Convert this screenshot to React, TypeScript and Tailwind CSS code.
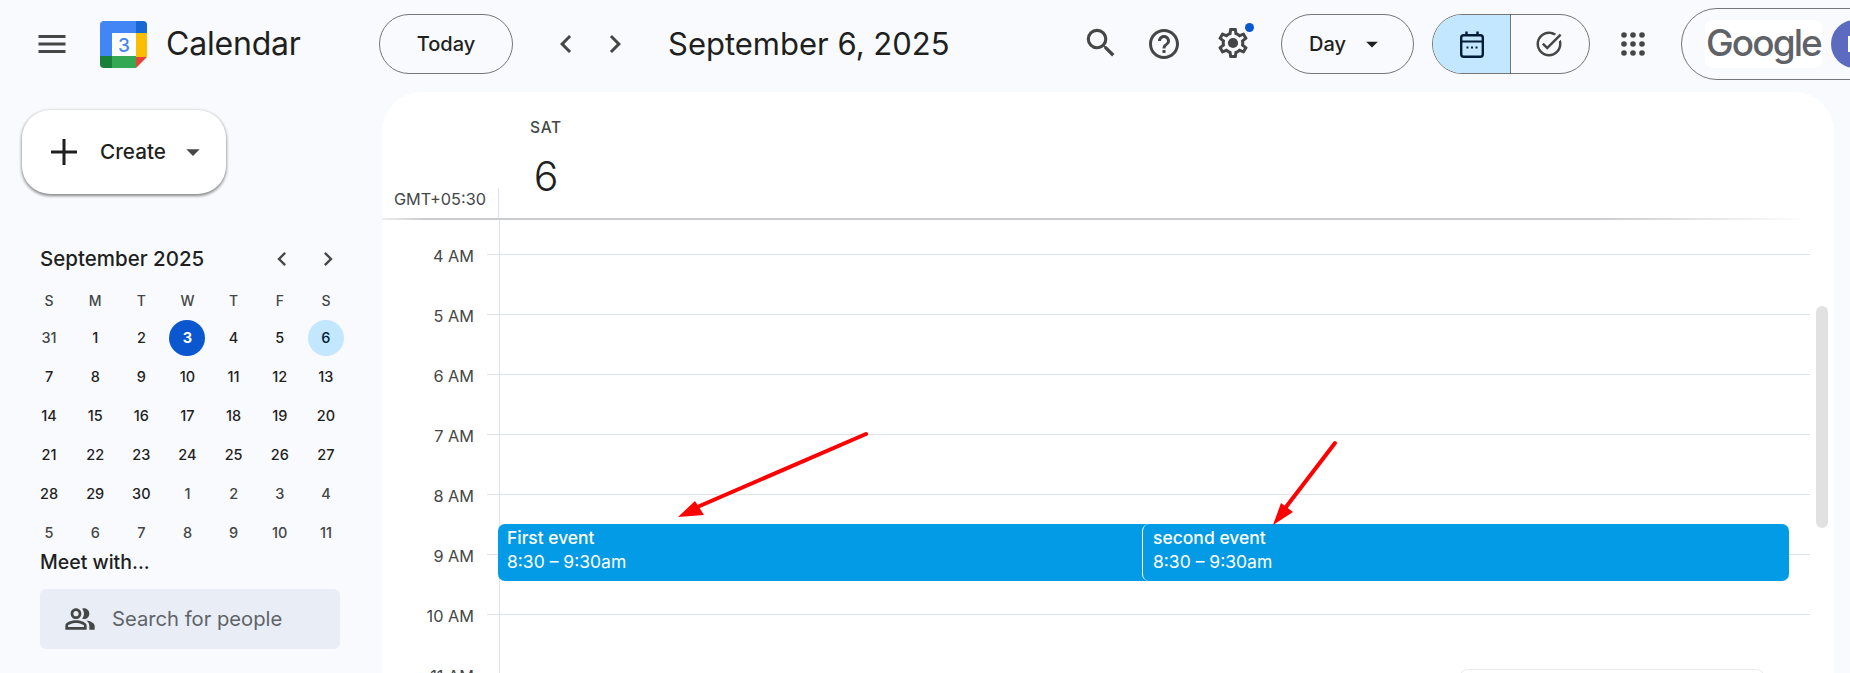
import { MdMenu, MdSearch, MdHelpOutline, MdOutlineTaskAlt, MdArrowDropDown, MdChevronLeft, MdChevronRight, MdOutlinePeopleAlt } from "react-icons/md";

const heads = ["S", "M", "T", "W", "T", "F", "S"];
const days = [31,1,2,3,4,5,6,7,8,9,10,11,12,13,14,15,16,17,18,19,20,21,22,23,24,25,26,27,28,29,30,1,2,3,4,5,6,7,8,9,10,11];
const hours = ["4 AM","5 AM","6 AM","7 AM","8 AM","9 AM","10 AM","11 AM"];

function Logo() {
  return (
    <svg width="47" height="47" viewBox="0 0 47 47" className="shrink-0">
      <path d="M4 0H36V12H12V35H0V4A4 4 0 0 1 4 0Z" fill="#4285f4" />
      <path d="M36 0H43A4 4 0 0 1 47 4V12H36Z" fill="#1967d2" />
      <rect x="36" y="12" width="11" height="24" fill="#fbbc04" />
      <path d="M36 36H47L36 47Z" fill="#ea4335" />
      <rect x="12" y="35" width="24" height="12" fill="#34a853" />
      <path d="M0 35H12V47H4A4 4 0 0 1 0 43Z" fill="#188038" />
      <rect x="12" y="12" width="24" height="23" fill="#ffffff" />
      <text x="24" y="30.5" textAnchor="middle" fontSize="19" fontWeight="500" fontFamily="Inter, sans-serif" fill="#4285f4">3</text>
    </svg>
  );
}

function CalIcon() {
  return (
    <svg width="24" height="27" viewBox="0 0 24 27" fill="none" stroke="#001d35" strokeWidth="2.4">
      <rect x="1.2" y="4.2" width="21.6" height="21.6" rx="2.5" />
      <path d="M1.5 10.5H22.5" strokeWidth="1.8" />
      <path d="M6.5 0.5V5M17.5 0.5V5" />
      <path d="M6.5 16.5H17.5" strokeWidth="2" strokeDasharray="2 2.5" />
    </svg>
  );
}

function Apps() {
  return (
    <svg width="24" height="24" viewBox="0 0 24 24" fill="#444746">
      {[3, 12, 21].map((y) => [3, 12, 21].map((x) => <circle key={`${x}-${y}`} cx={x} cy={y} r="2.8" />))}
    </svg>
  );
}

function Gear() {
  return (
    <svg width="36" height="36" viewBox="0 0 24 24" fill="#444746">
      <path d="M19.43 12.98c.04-.32.07-.64.07-.98 0-.34-.03-.66-.07-.98l2.11-1.65c.19-.15.24-.42.12-.64l-2-3.46c-.09-.16-.26-.25-.44-.25-.06 0-.12.01-.17.03l-2.49 1c-.52-.4-1.08-.73-1.69-.98l-.38-2.65C14.46 2.18 14.25 2 14 2h-4c-.25 0-.46.18-.49.42l-.38 2.65c-.61.25-1.17.59-1.69.98l-2.49-1c-.06-.02-.12-.03-.18-.03-.17 0-.34.09-.43.25l-2 3.46c-.13.22-.07.49.12.64l2.11 1.65c-.04.32-.07.65-.07.98 0 .33.03.66.07.98l-2.11 1.65c-.19.15-.24.42-.12.64l2 3.46c.09.16.26.25.44.25.06 0 .12-.01.17-.03l2.49-1c.52.4 1.08.73 1.69.98l.38 2.65c.03.24.24.42.49.42h4c.25 0 .46-.18.49-.42l.38-2.65c.61-.25 1.17-.59 1.69-.98l2.49 1c.06.02.12.03.18.03.17 0 .34-.09.43-.25l2-3.46c.12-.22.07-.49-.12-.64l-2.11-1.65zm-1.98-1.71c.04.31.05.52.05.73 0 .21-.02.43-.05.73l-.14 1.13.89.7 1.08.84-.7 1.21-1.27-.51-1.04-.42-.9.68c-.43.32-.84.56-1.25.73l-1.06.43-.16 1.13-.2 1.35h-1.4l-.19-1.35-.16-1.13-1.06-.43c-.43-.18-.83-.41-1.23-.71l-.91-.7-1.06.43-1.27.51-.7-1.21 1.08-.84.89-.7-.14-1.13c-.03-.31-.05-.54-.05-.74s.02-.43.05-.73l.14-1.13-.89-.7-1.08-.84.7-1.21 1.27.51 1.04.42.9-.68c.43-.32.84-.56 1.25-.73l1.06-.43.16-1.13.2-1.35h1.39l.19 1.35.16 1.13 1.06.43c.43.18.83.41 1.23.71l.91.7 1.06-.43 1.27-.51.7 1.21-1.07.85-.89.7.14 1.13z" />
      <circle cx="12" cy="12" r="3.4" />
    </svg>
  );
}

function TopBar() {
  return (
    <header className="flex h-[92px] items-start pt-[14px] text-[#1f1f1f]">
      <div className="flex h-[60px] w-[379px] shrink-0 items-center">
        <MdMenu size={36} className="ml-[34px] text-[#444746]" />
        <div className="ml-[30px]"><Logo /></div>
        <span className="ml-[19px] text-[32px] tracking-[-0.2px]">Calendar</span>
      </div>
      <button className="h-[60px] w-[134px] shrink-0 rounded-full border border-[#747775] text-[20px] font-medium">Today</button>
      <MdChevronLeft size={36} className="ml-[35px] mt-[12px] shrink-0 text-[#444746]" />
      <MdChevronRight size={36} className="ml-[13px] mt-[12px] shrink-0 text-[#444746]" />
      <h1 className="ml-[35px] h-[60px] w-[282px] shrink-0 whitespace-nowrap text-[31px] leading-[60px]">September 6, 2025</h1>
      <MdSearch size={38} className="ml-[132px] mt-[10px] shrink-0 text-[#444746]" />
      <MdHelpOutline size={36} className="ml-[26px] mt-[12px] shrink-0 text-[#444746]" />
      <div className="relative ml-[33px] mt-[11px] h-[36px] w-[36px] shrink-0">
        <Gear />
        <span className="absolute left-[30px] top-[-2px] h-[9px] w-[9px] rounded-full bg-[#0b57d0]" />
      </div>
      <button className="ml-[30px] flex h-[60px] w-[133px] shrink-0 items-center rounded-full border border-[#747775] pl-[27px] text-[20px] font-medium">
        Day
        <MdArrowDropDown size={28} className="ml-[12px] text-[#1f1f1f]" />
      </button>
      <div className="ml-[18px] flex h-[60px] w-[158px] shrink-0 overflow-hidden rounded-full border border-[#747775]">
        <div className="flex w-[78px] items-center justify-center border-r border-[#747775] bg-[#c2e7ff]"><CalIcon /></div>
        <div className="flex flex-1 items-center justify-center pr-[3px]"><MdOutlineTaskAlt size={30} className="text-[#444746]" /></div>
      </div>
      <div className="ml-[31px] mt-[18px] shrink-0"><Apps /></div>
      <div className="ml-[36px] mt-[-6px] flex h-[72px] w-[300px] shrink-0 items-center rounded-l-[36px] border border-[#747775] pl-[23px]">
        <div className="flex h-[48px] w-[117px] shrink-0 items-center justify-center rounded-lg bg-white">
          <span className="pb-[3px] text-[37px] font-medium leading-none tracking-[-1.9px] text-[#5f6368]">Google</span>
        </div>
        <div className="ml-[9px] flex h-[48px] w-[48px] shrink-0 items-center rounded-full bg-[#5c6bc0] pl-[17px]">
          <span className="h-[16px] w-[2px] bg-white" />
        </div>
      </div>
    </header>
  );
}

function Sidebar() {
  return (
    <aside className="w-[382px] shrink-0 text-[#1f1f1f]">
      <button className="ml-[22px] mt-[18px] flex h-[84px] w-[204px] items-center rounded-[28px] bg-white pl-[27px] shadow-[0_1px_3px_1px_rgba(0,0,0,0.2),0_2px_3px_rgba(0,0,0,0.3)]">
        <svg width="30" height="30" viewBox="0 0 30 30" stroke="#1f1f1f" strokeWidth="3" className="shrink-0"><path d="M15 2V28M2 15H28" /></svg>
        <span className="ml-[21px] text-[20.7px] font-medium leading-none">Create</span>
        <MdArrowDropDown size={32} className="ml-[11px] shrink-0 text-[#444746]" />
      </button>
      <div className="ml-[40px] mt-[47px] flex h-[36px] w-[310px] items-center">
        <span className="w-[220px] text-[20.5px] font-[450] leading-none">September 2025</span>
        <MdChevronLeft size={28} className="ml-[8px] text-[#444746]" />
        <MdChevronRight size={28} className="ml-[18px] text-[#444746]" />
      </div>
      <div className="ml-[26px] mt-[6px] grid w-[323px] grid-cols-7">
        {heads.map((h, i) => (
          <div key={i} className="flex h-[35px] items-center justify-center text-[14px] font-medium text-[#444746]">{h}</div>
        ))}
        {days.map((d, i) => {
          const other = i === 0 || i >= 31;
          const today = i === 3;
          const sel = i === 6;
          return (
            <div key={i} className="flex h-[39px] items-center justify-center">
              <span className={`flex h-9 w-9 items-center justify-center rounded-full text-[14.5px] ${today ? "bg-[#0b57d0] font-bold text-white" : sel ? "bg-[#c2e7ff] font-[450] text-[#001d35]" : other ? "font-[450] text-[#444746]" : "font-[450] text-[#1f1f1f]"}`}>{d}</span>
            </div>
          );
        })}
      </div>
      <div className="ml-[40px] mt-[-2px] h-[24px] text-[19.5px] font-medium leading-[24px]">Meet with...</div>
      <div className="ml-[40px] mt-[15px] flex h-[60px] w-[300px] items-center rounded-md bg-[#e9eef6] pl-[24px]">
        <MdOutlinePeopleAlt size={32} className="text-[#444746]" />
        <span className="ml-[16px] text-[20.2px] text-[#5f6368]">Search for people</span>
      </div>
    </aside>
  );
}

function Grid() {
  return (
    <section className="relative flex h-[581px] w-[1452px] shrink-0 overflow-hidden rounded-t-[40px] bg-white">
      <div className="w-[1428px] shrink-0">
        <div className="flex h-[126px]">
          <div className="flex h-[30px] w-[117px] shrink-0 items-center justify-end self-end border-r border-[#dde3ea] pr-[12px] text-[16.3px] text-[#444746]">
            <span className="mb-[8px] leading-5">GMT+05:30</span>
          </div>
          <div className="flex w-[94px] flex-col items-center pt-[26px]">
            <span className="text-[15.5px] font-medium leading-5 tracking-[0.8px] text-[#444746]">SAT</span>
            <span className="mt-[13px] text-[41px] font-light leading-[50px] text-[#1f1f1f]">6</span>
          </div>
        </div>
        <div className="h-[2px] bg-[linear-gradient(90deg,#eceef0_0,#c9cbce_3%,#c9cbce_85%,#ffffff_100%)]" />
        {hours.map((h, i) => (
          <div key={h} className={`flex ${i === 0 ? "h-[35px]" : "h-[60px]"}`}>
            <div className="flex w-[105px] shrink-0 items-end justify-end pr-[13px]">
              <span className="mb-[-11px] text-[16.3px] leading-5 text-[#444746]">{h}</span>
            </div>
            <div className="w-[12px] shrink-0 border-b border-[#dde3ea]" />
            <div className="flex-1 border-b border-l border-[#dde3ea]" />
          </div>
        ))}
      </div>
      <div className="ml-[6px] mt-[214px] h-[222px] w-3 shrink-0 rounded-full bg-[#e1e1e1]" />

      <div className="absolute left-[116px] top-[432px] h-[57px] w-[670px] rounded-[7px] bg-[#039be5] pl-[9px] pt-[2px] text-white">
        <div className="text-[17.4px] font-medium leading-6">First event</div>
        <div className="text-[17.5px] leading-6">8:30 – 9:30am</div>
      </div>
      <div className="absolute left-[760px] top-[432px] h-[57px] w-[647px] rounded-[7px] border-l border-white bg-[#039be5] pl-[10px] pt-[2px] text-white">
        <div className="text-[17.5px] font-medium leading-6">second event</div>
        <div className="text-[17.5px] leading-6">8:30 – 9:30am</div>
      </div>
      <div className="absolute left-[1075px] top-[577px] h-[40px] w-[310px] rounded-t-xl border border-[#ececec] bg-white" />
    </section>
  );
}

function Arrows() {
  return (
    <svg className="pointer-events-none absolute left-0 top-0" width="1850" height="673">
      <path d="M866 434L695 508" stroke="#ff0000" strokeWidth="4" strokeLinecap="round" fill="none" />
      <path d="M678 517L695 501L704 515Z" fill="#ff0000" />
      <path d="M1335 443L1286 507" stroke="#ff0000" strokeWidth="4" strokeLinecap="round" fill="none" />
      <path d="M1273 525L1281 503L1293 512Z" fill="#ff0000" />
    </svg>
  );
}

export default function App() {
  return (
    <div className="relative h-[673px] w-[1850px] overflow-hidden bg-[#f8fafd] [font-family:Inter,sans-serif]">
      <TopBar />
      <div className="flex">
        <Sidebar />
        <Grid />
      </div>
      <Arrows />
    </div>
  );
}
